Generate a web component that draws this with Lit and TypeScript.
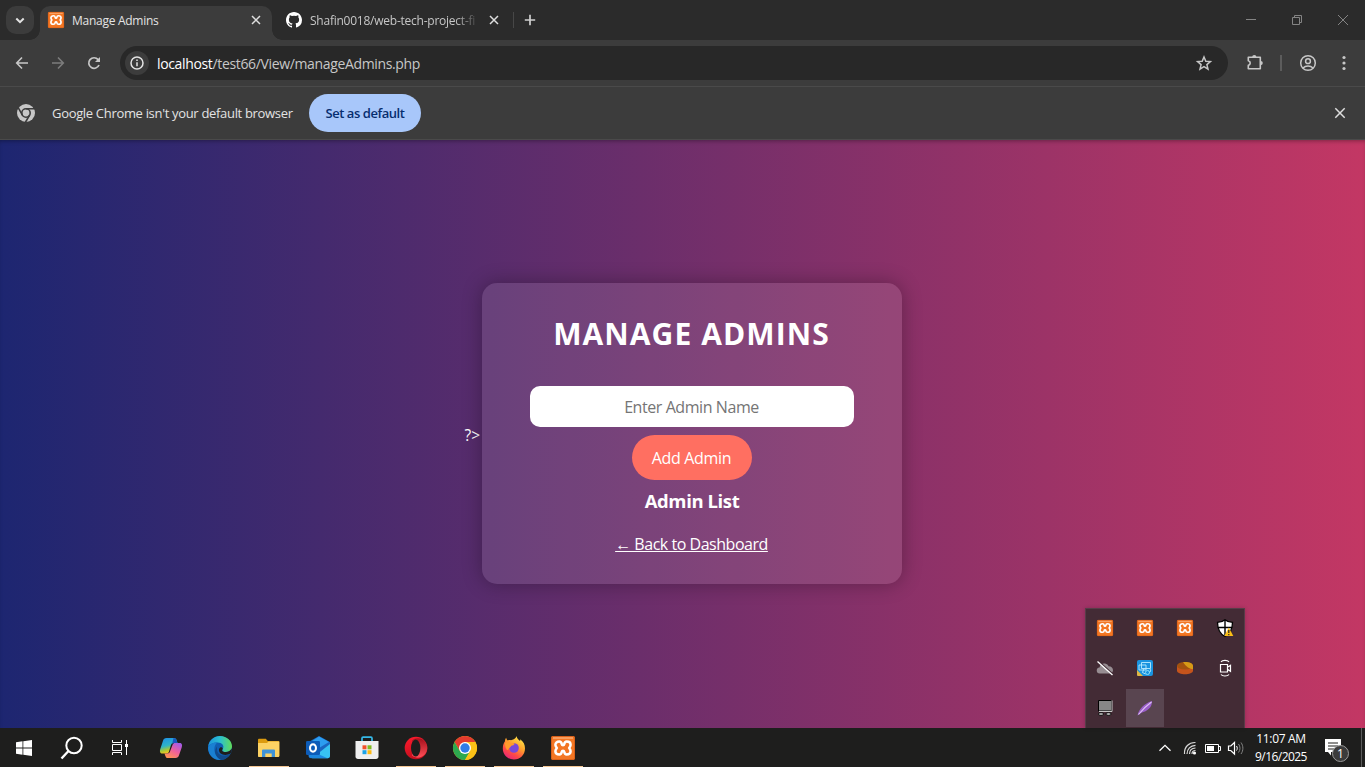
import { LitElement, html, css, svg } from "lit";
import { customElement, property } from "lit/decorators.js";
import { classMap } from "lit/directives/class-map.js";

const icons: Record<string, unknown> = {
  chevronDown: svg`<path d="M8.3 10.5l3.7 3.7 3.7-3.7" fill="none" stroke="#e3e3e3" stroke-width="2"/>`,
  close: svg`<path d="M8 8l8 8M16 8l-8 8" stroke="#dedede" stroke-width="1.5"/>`,
  closeBig: svg`<path d="M7.3 7.3l9.4 9.4M16.700 7.3l-9.4 9.4" stroke="#dedede" stroke-width="1.5"/>`,
  plus: svg`<path d="M12 6.800v10.400M6.800 12h10.400" stroke="#d0d0d0" stroke-width="1.7"/>`,
  winMin: svg`<path d="M7 11.500h10" stroke="#848484" stroke-width="1"/>`,
  winMax: svg`<path d="M7.500 9.500h7v7h-7zM9.500 9.500v-2h7v7h-2" fill="none" stroke="#848484"/>`,
  winClose: svg`<path d="M7 7l10 10M17 7L7 17" stroke="#848484"/>`,
  back: svg`<path d="M18 12H7M12 6.500L6.700 12l5.300 5.500" fill="none" stroke="#c7c7c7" stroke-width="1.6"/>`,
  forward: svg`<path d="M6 12h11M12 6.500l5.300 5.500-5.300 5.500" fill="none" stroke="#7c7c7c" stroke-width="1.6"/>`,
  reload: svg`<path d="M17 14a5.300 5.300 0 1 1-.9-5.400L17.300 10" fill="none" stroke="#c7c7c7" stroke-width="1.7"/><path d="M18 6v5h-5z" fill="#c7c7c7"/>`,
  info: svg`<circle cx="12" cy="12" r="6" fill="none" stroke="#e3e3e3" stroke-width="1.5"/><path d="M12 11.300v3.900M12 8.500v1.500" stroke="#e3e3e3" stroke-width="1.5"/>`,
  star: svg`<path d="M12 6l1.800 4.200 4.600.4-3.500 3 1.100 4.500-4-2.400-4 2.400 1.100-4.500-3.500-3 4.600-.4z" fill="none" stroke="#c7c7c7" stroke-width="1.5"/>`,
  puzzle: svg`<path d="M6.300 6.300h12v11.400h-12v-3.300a2.400 2.400 0 0 0 0-4.700z" fill="none" stroke="#c7c7c7" stroke-width="1.600" stroke-linejoin="round"/><path d="M10.200 6a2.100 2.100 0 0 1 4.200 0zM18.700 10a2.100 2.100 0 0 1 0 4.200z" fill="#c7c7c7"/>`,
  profile: svg`<circle cx="12" cy="12" r="7.300" fill="none" stroke="#c7c7c7" stroke-width="1.500"/><circle cx="12" cy="10.200" r="2.400" fill="none" stroke="#c7c7c7" stroke-width="1.500"/><path d="M7 17c2.600-2.700 7.400-2.700 10 0" fill="none" stroke="#c7c7c7" stroke-width="1.500"/>`,
  dots: svg`<circle cx="12" cy="6.500" r="1.600" fill="#c7c7c7"/><circle cx="12" cy="12" r="1.600" fill="#c7c7c7"/><circle cx="12" cy="17.500" r="1.600" fill="#c7c7c7"/>`,
  chromeMono: svg`<circle cx="12" cy="12" r="9" fill="#c7c7c7"/><circle cx="12" cy="12" r="4.200" fill="none" stroke="#3c3c3c" stroke-width="1.600"/><path d="M12 7.800h8.600M8.400 14.100L4.200 6.700M15.600 14.100l-4.300 7.400" stroke="#3c3c3c" stroke-width="1.600"/>`,
  github: svg`<path fill="#fff" transform="translate(4 4)" d="M8 0C3.580 0 0 3.580 0 8c0 3.540 2.290 6.530 5.470 7.590.4.070.55-.17.55-.38v-1.490c-2.230.49-2.700-1.070-2.700-1.070-.36-.92-.89-1.170-.89-1.170-.73-.5.050-.49.050-.49.8.060 1.230.83 1.230.83.71 1.220 1.870.87 2.330.66.070-.52.280-.87.500-1.070-1.780-.2-3.640-.89-3.640-3.950 0-.87.310-1.590.82-2.150-.080-.2-.36-1.020.080-2.120 0 0 .67-.21 2.200.82a7.600 7.600 0 0 1 4 0c1.530-1.040 2.200-.82 2.200-.82.44 1.100.16 1.920.080 2.120.51.56.82 1.270.82 2.150 0 3.070-1.870 3.750-3.650 3.950.29.250.54.730.54 1.480v2.200c0 .21.150.46.550.38A8 8 0 0 0 16 8c0-4.420-3.580-8-8-8z"/>`,
  xampp: svg`<rect width="24" height="24" rx="2" fill="#f37623"/><rect x=".5" y=".5" width="23" height="23" rx="1.500" fill="none" stroke="#d9601a"/><path d="M2 2h20" stroke="#fbc49a" stroke-width="1"/><path d="M8.300 5.600C10.300 5.600 10.600 7 10.800 8.200Q11 9.200 12 9.200Q13 9.200 13.200 8.200C13.400 7 13.700 5.600 15.700 5.600C18 5.600 19.600 6.800 19.600 8.800C19.600 10.300 18.700 11 18.200 12C18.700 13 19.600 13.700 19.600 15.200C19.600 17.200 18 18.400 15.700 18.400C13.700 18.400 13.400 17 13.200 15.800Q13 14.800 12 14.800Q11 14.800 10.800 15.800C10.600 17 10.300 18.400 8.300 18.400C6 18.400 4.400 17.200 4.400 15.200C4.400 13.700 5.300 13 5.800 12C5.300 11 4.400 10.300 4.400 8.800C4.400 6.800 6 5.600 8.300 5.600z" fill="none" stroke="#fff" stroke-width="2.500"/>`,
  start: svg`<path fill="#fff" d="M4 6.200l6.500-.9v6.200H4zM11.300 5.200L20 4v7.500h-8.700zM4 12.400h6.500v6.300L4 17.800zM11.300 12.400H20V20l-8.700-1.200z"/>`,
  search: svg`<circle cx="14" cy="9.500" r="7.700" fill="none" stroke="#fff" stroke-width="2"/><path d="M8.500 15L1.500 22.500" stroke="#fff" stroke-width="2.400"/>`,
  taskView: svg`<path d="M4.500 4v2.500h9V4M4.500 19v-2.500h9V19M4.500 8.500h9v6h-9zM18.500 4v15" fill="none" stroke="#fff"/><rect x="17" y="8" width="3" height="3" fill="#fff"/>`,
  copilot: svg`<defs><linearGradient id="ca" x1="0" y1="0" x2=".3" y2="1"><stop offset="0" stop-color="#1d8fe8"/><stop offset=".55" stop-color="#2fb4c8"/><stop offset=".8" stop-color="#a3c93a"/><stop offset="1" stop-color="#f7c51e"/></linearGradient><linearGradient id="cb" x1=".8" y1="0" x2=".2" y2="1"><stop offset="0" stop-color="#a35be8"/><stop offset=".5" stop-color="#f0609a"/><stop offset="1" stop-color="#ff9550"/></linearGradient></defs><path d="M7.500 2H15c1.700 0 2.300 1 2.800 2.600L18.500 7H15c-2 0-2.700.8-3.200 2.500L10 15.500c-.5 1.400-1.200 2-2.700 2H3.500C1 17.500.5 15.500 1.300 13L4 4.800C4.600 3 5.500 2 7.500 2z" fill="url(#ca)"/><path d="M16.500 22H9c-1.700 0-2.300-1-2.800-2.600L5.500 17.500H8c2 0 2.700-.8 3.200-2.500L13.500 9c.5-1.500 1.400-2 2.700-2h4.300c2.500 0 3 2 2.200 4.500L20 19.200c-.6 1.800-1.500 2.800-3.500 2.800z" fill="url(#cb)"/><path d="M14.500 2c2 0 2.700 1 3.200 2.500l.8 2.500h-3.300c-.8 0-1.500.2-2 .7z" fill="#1856c0"/>`,
  edge: svg`<defs><linearGradient id="ea" x1="0" y1=".3" x2="1" y2=".3"><stop offset="0" stop-color="#1c93dd"/><stop offset=".5" stop-color="#2bc0cf"/><stop offset="1" stop-color="#62dc58"/></linearGradient></defs><circle cx="12" cy="12" r="12" fill="#0f5fb4"/><path d="M.2 10.500C1 4.500 6 0 12 0c7 0 12 5.200 12 10.300 0 3.700-3 5.700-6 5.700-3 0-4.300-1.200-3.400-2.600 2.400-3.600-.6-6.900-5-6.900C5 6.500 1.200 8.600.2 10.500z" fill="url(#ea)"/><path d="M9.500 6.600C5.500 9 4 19 13.500 23.900 6 25 0 19 .100 11.500 1 8.500 5.500 6.300 9.500 6.600z" fill="#1a80d2"/><path d="M9 13c-.3 6 6.500 8.500 13 5-2.600 4.300-6 5.900-9 5.900C7 21 5.500 15 9 10.500z" fill="#114a8b"/><path d="M14.500 13.300c-1.200 1.700.5 2.900 3.500 2.700 2.500-.1 4.500-1.200 5.500-3.500.8 2-.3 4-1.300 5.300-5 2.500-11.700.8-11.200-4.200.2-1.400 1-2.200 2-2.700 1.200.4 2.200 1.400 1.500 2.400z" fill="#1e1e1d"/>`,
  explorer: svg`<path d="M1 4c0-.8.500-1.300 1.300-1.300h6.500l2 2.300H21c.8 0 1.300.5 1.300 1.300V20H1z" fill="#dc9b10"/><path d="M1 7h9l1.500-1.500H22.300V20c0 .7-.5 1-1 1H2c-.6 0-1-.4-1-1z" fill="#fcd264"/><path d="M5 21v-6.200c0-.8.500-1.300 1.300-1.300h10.400c.8 0 1.300.5 1.300 1.300V21h-3.300v-3.500H8.300V21z" fill="#3f93d8"/>`,
  outlook: svg`<path d="M13 0l11 6v14c0 1.200-1 2.200-2.200 2.200H5C3.500 22.200 2.500 21 2.500 20V6z" fill="#1a66c0"/><path d="M13 .5L23 6 8 15 3 7z" fill="#2c9df0"/><path d="M24 8v12c0 1.200-1 2.200-2.200 2.200H6z" fill="#37c2f1"/><path d="M3 14l18 8H5c-1.300 0-2-.9-2-2z" fill="#1d87df"/><rect y="5" width="14" height="14" rx="1.300" fill="#0d5cb8"/><ellipse cx="7" cy="12" rx="3" ry="3.700" fill="none" stroke="#fff" stroke-width="2"/>`,
  store: svg`<path d="M7 6V2.300c0-.7.400-1.100 1.100-1.100h7.800c.7 0 1.100.4 1.100 1.100V6" fill="none" stroke="#35b9e8" stroke-width="1.700"/><path d="M.5 5h23v15.500c0 1.500-1 2.500-2.500 2.500H3C1.500 23 .5 22 .5 20.500z" fill="#efefef"/><path fill="#f0502a" d="M7.500 9.300h4v4h-4z"/><path fill="#7fba20" d="M12.500 9.300h4v4h-4z"/><path fill="#1ba3e8" d="M7.500 14.200h4v4h-4z"/><path fill="#fdb913" d="M12.500 14.200h4v4h-4z"/>`,
  opera: svg`<defs><linearGradient id="oa" x1="0" y1="0" x2=".3" y2="1"><stop offset="0" stop-color="#ff1b2d"/><stop offset="1" stop-color="#c50f1e"/></linearGradient><linearGradient id="ob" x1="0" y1="0" x2="0" y2="1"><stop offset="0" stop-color="#a5101c"/><stop offset="1" stop-color="#ff5058"/></linearGradient></defs><ellipse cx="12" cy="12" rx="11.300" ry="11.300" fill="url(#oa)"/><path d="M8 4.500c3.500-3 8.500-2.800 12 .2 4.300 4 4.300 10.700 0 14.600-3.500 3-8.500 3.200-12 .2z" fill="url(#ob)"/><ellipse cx="11.700" cy="12" rx="4.700" ry="8.600" fill="#1e1e1d"/>`,
  chrome: svg`<circle cx="12" cy="12" r="12" fill="#fbc116"/><path d="M12 6h10.400A12 12 0 0 0 1.600 6l5.200 9z" fill="#e33b2e"/><path d="M1.600 6A12 12 0 0 0 12 24l5.200-9-10.400 0z" fill="#2da94f"/><path d="M17.200 15L12 24A12 12 0 0 0 22.400 6H12z" fill="#fbc116"/><circle cx="12" cy="12" r="6" fill="#fff"/><circle cx="12" cy="12" r="4.700" fill="#2f7de9"/>`,
  firefox: svg`<defs><linearGradient id="fa" x1=".8" y1="0" x2=".2" y2="1"><stop offset="0" stop-color="#fff04a"/><stop offset=".4" stop-color="#ffa02c"/><stop offset=".7" stop-color="#ff4a46"/><stop offset="1" stop-color="#e4207f"/></linearGradient></defs><path d="M14.500 0c.5 2.500 2 3.600 3.500 5 .4-.6.3-1 .2-1.700C21.500 5.500 23 9 23 12.500 23 19 18 23.500 12 23.500S.8 19 .8 12.500C.8 9 2 6.500 3 5.200 3 4 3.300 2.800 4.200 1.800c.2 1.500.8 2 1.600 2.700C7 4 8 4 9 4.300 10.500 3.500 14 3 14.500 0z" fill="url(#fa)"/><circle cx="12" cy="12" r="4.800" fill="#7a48d8"/><path d="M3 7c2-1.500 4-1 5 0 2 0 4.500-.2 4.500.8 0 1.200-2 1.800-3.500 2.200-.3 1.500-2 1.800-2.500 3C5.500 16 3 12 3 7z" fill="#ff9b2a"/>`,
  chevronUp: svg`<path d="M6.500 14.800l5.500-5.500 5.500 5.500" fill="none" stroke="#fff" stroke-width="1.300"/>`,
  wifi: svg`<g fill="none" stroke="#d8d8d8" stroke-width="1.200"><path d="M6.500 18C6 11 11 6.200 17.500 6.500M9 18c0-5 3.500-8.500 8.500-8.700M11.500 18c0-3.500 2.500-5.800 6-6M14 18c0-2 1.500-3.500 3.500-3.500"/></g><circle cx="16.500" cy="17" r="1.600" fill="#fff"/>`,
  battery: svg`<path d="M4.500 8.500h13v8h-13zM18 10.500h1.500v4H18" fill="none" stroke="#fff"/><path d="M6 10h7v5H6z" fill="#fff"/>`,
  speaker: svg`<path d="M4.500 10v4.500h2.300l3.700 3.500V6.500L6.800 10z" fill="none" stroke="#fff" stroke-width="1.200"/><path d="M12.500 10c1 1.300 1 3.200 0 4.500" fill="none" stroke="#fff"/><path d="M14.500 8c2 2.500 2 6 0 8.500M17 6.500c2.500 3.500 2.500 8 0 11.500" fill="none" stroke="#858585"/>`,
  notify: svg`<path d="M3 3h16v13H9v3.500L6 16H3z" fill="#fff"/><path d="M6 7h10M6 10h10M6 13h6" stroke="#1e1e1d"/>`,
  shield: svg`<path d="M12 3.800c2 1.800 4.500 2.500 7.500 2.500 0 7-2 11.500-7.500 14.200C6.500 17.800 4.500 13.300 4.500 6.300c3 0 5.500-.7 7.500-2.500z" fill="#fff" stroke="#000" stroke-width="1.300"/><path d="M12 4v16M5 11.500h14" stroke="#000" stroke-width="1.400"/><path d="M15.800 11.500L20.300 20h-9z" fill="#fcbf16"/><path d="M15.800 14v3M15.800 18v1.200" stroke="#222" stroke-width="1.200"/>`,
  cloudOff: svg`<path d="M7 17.500a3 3 0 0 1-.5-6c.5-3 3-4.500 5.500-4 2 .3 3 1.500 3.500 2.700 3 0 4.500 2 4.500 4s-1.500 3.300-3.300 3.300z" fill="#978d92"/><path d="M5.300 5l15 13.500" stroke="#432b35" stroke-width="1.600"/><path d="M4.500 5.500l15 13.500" stroke="#fff" stroke-width="1.300"/>`,
  network: svg`<rect x="4" y="4" width="16" height="16" rx="2" fill="#1994e0"/><path d="M4 14l6 6H5.500C4.500 20 4 19.500 4 18.500z" fill="#e0b743"/><path d="M8.500 6.500h9v6h-9zM6 9h7v5H6zM11 12.500l-1.500 4 3 1.500M17 13c1 1 1 3-1 3.500" fill="none" stroke="#b9ebff" stroke-width=".9"/><circle cx="14.500" cy="16.500" r="2" fill="none" stroke="#8de0f5"/>`,
  disc: svg`<path d="M4 9.500v5c0 5 16 5 16 0v-5z" fill="#c5541c"/><ellipse cx="12" cy="9.800" rx="8" ry="3.800" fill="#a2520f"/><path d="M10 6.200c5-.7 10 1 10 3.600v3.500c-3-.3-7-2.500-10-7.100z" fill="#d59a17"/>`,
  camera: svg`<path d="M7.500 8.500h7v7.500h-7zM14.500 11.300l3-2v6l-3-2" fill="none" stroke="#fff" stroke-width="1.200"/><path d="M8 5.800c1.500-2 6.500-2 8 0M8 18.500c1.500 2 6.500 2 8 0" fill="none" stroke="#fff" stroke-width="1.200"/>`,
  monitor: svg`<path d="M5.500 4.500h13v10.500h-13z" fill="#878787" stroke="#000"/><path d="M6 15.500h13v-11" fill="none" stroke="#c8c8c8"/><ellipse cx="8" cy="18" rx="2.600" ry="1.500" fill="#aaa" stroke="#000" stroke-width=".8"/><ellipse cx="15.500" cy="18" rx="2.600" ry="1.500" fill="#aaa" stroke="#000" stroke-width=".8"/>`,
  feather: svg`<path d="M4.500 19.500C6 13 11 7.500 19 5c.3 4.500-2.500 9-8.500 11-2 .7-3.500 1.500-6 3.500z" fill="#9a5fc9"/><path d="M5.500 18.500C9 14 13 10 18.500 6" stroke="#e0c4f5" stroke-width="1.100" fill="none"/>`,
};

@customElement("ui-icon")
export class UiIcon extends LitElement {
  @property() name = "";
  static styles = css`
    :host { display: block; width: 24px; height: 24px; flex: none; }
    svg { display: block; width: 100%; height: 100%; overflow: visible; }
  `;
  render() {
    return html`<svg viewBox="0 0 24 24" aria-hidden="true">${icons[this.name]}</svg>`;
  }
}

@customElement("browser-chrome")
export class BrowserChrome extends LitElement {
  static styles = css`
    :host { display: block; flex: none; color: #e3e3e3; font-size: 12px; }
    .strip { display: flex; height: 40px; background: #2b2b2b; align-items: center; padding-left: 6px; box-sizing: border-box; }
    .list { width: 28px; height: 28px; border-radius: 10px; background: #3c3c3c; display: grid; place-items: center; margin-right: 6px; }
    .tab { display: flex; align-items: center; width: 232px; box-sizing: border-box; padding: 0 4px 0 8px; align-self: flex-end; position: relative; }
    .active { background: #3c3c3c; border-radius: 10px 10px 0 0; height: 34px; padding-bottom: 6px; }
    .active::before, .active::after { content: ""; position: absolute; bottom: 0; width: 10px; height: 10px; }
    .active::before { left: -10px; background: radial-gradient(circle at 0 0, transparent 9.500px, #3c3c3c 10px); }
    .active::after { right: -10px; background: radial-gradient(circle at 100% 0, transparent 9.500px, #3c3c3c 10px); }
    .second { padding-left: 14px; width: 234px; height: 40px; }
    .fav { width: 16px; height: 16px; margin-right: 8px; }
    .gh { width: 24px; height: 24px; margin: 0 4px 0 -4px; }
    .title { flex: 1; white-space: nowrap; letter-spacing: -0.27px; line-height: 18px; padding-top: 2px; }
    .second .title { flex: none; width: 168px; margin-right: 4px; color: #c7c7c7; letter-spacing: -0.24px; -webkit-mask-image: linear-gradient(to right, #000 145px, transparent 170px); mask-image: linear-gradient(to right, #000 145px, transparent 170px); }
    .sep { width: 1px; height: 16px; background: #474747; margin: 0 4px 0 7px; }
    .controls { margin-left: auto; display: flex; gap: 22px; padding-right: 10px; }
    .toolbar { display: flex; align-items: center; height: 46px; background: #3c3c3c; padding: 0 9px 0 10px; }
    .nav { display: flex; gap: 12px; margin-right: 14px; }
    .omni { flex: 1; height: 34px; border-radius: 17px; background: #282828; display: flex; align-items: center; padding: 0 12px 0 5px; }
    .site { border-radius: 50%; background: #3c3c3c; width: 24px; height: 24px; margin-right: 8px; }
    .url { flex: 1; font-size: 14px; color: #c7c7c7; letter-spacing: -0.35px; }
    .url b { font-weight: 400; color: #fff; }
    .tools { display: flex; align-items: center; margin-left: 14px; }
    .bar { width: 2px; height: 16px; background: #5c5c5c; margin: 0 14px 0 14px; }
    .dots { margin-left: 12px; }
    .info { height: 54px; box-sizing: border-box; border-top: 1px solid #4a4a4a; border-bottom: 1px solid #4a4a4a; background: #3c3c3c; display: flex; align-items: center; padding: 0 13px 0 14px; font-size: 13px; }
    .msg { width: 241px; margin: 0 16px 0 14px; white-space: nowrap; letter-spacing: -0.32px; }
    .set { width: 112px; height: 38px; border-radius: 19px; background: #a8c7fa; color: #062e6f; font: inherit; font-weight: 600; border: 0; padding: 0; letter-spacing: -0.45px; }
    .dismiss { margin-left: auto; }
  `;
  render() {
    return html`
      <div class="strip">
        <div class="list"><ui-icon name="chevronDown"></ui-icon></div>
        <div class="tab active">
          <ui-icon class="fav" name="xampp"></ui-icon><span class="title">Manage Admins</span><ui-icon name="close"></ui-icon>
        </div>
        <div class="tab second">
          <ui-icon class="gh" name="github"></ui-icon><span class="title">Shafin0018/web-tech-project-fi</span><ui-icon name="close"></ui-icon>
        </div>
        <div class="sep"></div>
        <ui-icon name="plus"></ui-icon>
        <div class="controls"><ui-icon name="winMin"></ui-icon><ui-icon name="winMax"></ui-icon><ui-icon name="winClose"></ui-icon></div>
      </div>
      <div class="toolbar">
        <div class="nav"><ui-icon name="back"></ui-icon><ui-icon name="forward"></ui-icon><ui-icon name="reload"></ui-icon></div>
        <div class="omni">
          <ui-icon class="site" name="info"></ui-icon>
          <span class="url"><b>localhost</b>/test66/View/manageAdmins.php</span>
          <ui-icon name="star"></ui-icon>
        </div>
        <div class="tools">
          <ui-icon name="puzzle"></ui-icon>
          <div class="bar"></div>
          <ui-icon name="profile"></ui-icon>
          <ui-icon class="dots" name="dots"></ui-icon>
        </div>
      </div>
      <div class="info">
        <ui-icon name="chromeMono"></ui-icon>
        <span class="msg">Google Chrome isn't your default browser</span>
        <button class="set">Set as default</button>
        <ui-icon class="dismiss" name="closeBig"></ui-icon>
      </div>
    `;
  }
}

@customElement("admin-page")
export class AdminPage extends LitElement {
  static styles = css`
    :host { flex: 1; display: flex; justify-content: center; align-items: center; background: linear-gradient(to right, #1d2671, #c33764); color: #fff; font-size: 16px; box-shadow: inset 0 3px 4px -2px rgba(0, 0, 0, 0.35); box-sizing: border-box; }
    .stray { width: 17px; white-space: nowrap; line-height: 21px; font-size: 15.5px; padding-top: 2px; }
    .card { width: 420px; height: 301px; box-sizing: border-box; border-radius: 15px; background: rgba(255, 255, 255, 0.1); box-shadow: 0 0 20px rgba(0, 0, 0, 0.3); display: flex; flex-direction: column; align-items: center; padding: 30px 48px 0; margin-right: -1px; margin-top: -1px; }
    h2 { margin: 0 0 32px; font-size: 30px; line-height: 41px; font-weight: 700; letter-spacing: 1.1px; white-space: nowrap; }
    input { width: 100%; height: 41px; box-sizing: border-box; border: 0; border-radius: 10px; background: #fff; text-align: center; font: inherit; letter-spacing: -0.43px; padding: 0; }
    input::placeholder { color: #757575; }
    button { margin-top: 8px; width: 120px; height: 45px; border: 0; border-radius: 23px; background: #ff6f61; color: #fff; font: inherit; letter-spacing: -0.33px; padding: 0; }
    h3 { margin: 8px 0 0; font-size: 18.5px; line-height: 25px; letter-spacing: -0.4px; padding-left: 1px; }
    a { margin-top: 20px; line-height: 22px; color: #fff; text-decoration: underline; white-space: nowrap; letter-spacing: -0.47px; }
  `;
  render() {
    return html`
      <span class="stray">?&gt;</span>
      <section class="card">
        <h2>MANAGE ADMINS</h2>
        <input placeholder="Enter Admin Name" />
        <button>Add Admin</button>
        <h3>Admin List</h3>
        <a>← Back to Dashboard</a>
      </section>
    `;
  }
}

@customElement("task-bar")
export class TaskBar extends LitElement {
  static styles = css`
    :host { display: flex; flex: none; height: 39px; background: #1e1e1d; color: #fff; align-items: stretch; position: relative; }
    .sys { display: flex; align-items: center; gap: 24px; padding-left: 12px; width: 139px; box-sizing: border-box; }
    .apps { display: flex; gap: 9px; margin-left: 12px; }
    .app { width: 40px; box-sizing: border-box; display: grid; place-items: center; padding-top: 1px; border-bottom: 1px solid transparent; }
    .open { border-bottom-color: #f5c794; }
    .tray { margin-left: auto; display: flex; align-items: center; }
    .tray ui-icon + ui-icon { margin-left: -1px; }
    .tray .up { margin-right: 2px; }
    .clock { width: 66px; text-align: center; font-size: 12px; line-height: 18px; letter-spacing: -0.55px; }
    .time { letter-spacing: -0.35px; }
    .bell { position: relative; margin: 0 15px 0 8px; }
    .badge { position: absolute; left: 10px; top: 9px; width: 15px; height: 15px; border: 1px solid #9a9a9a; border-radius: 50%; background: #3b3b3b; font-size: 12px; line-height: 15px; text-align: center; }
    .end { width: 1px; align-self: stretch; background: #5b5b5b; margin-right: 3px; }
    .flyout { position: absolute; right: 120px; bottom: 39px; width: 160px; height: 120px; box-sizing: border-box; background: #432b35; border: 1px solid #573d48; border-bottom: 0; display: grid; grid-template-columns: repeat(4, 40px); grid-template-rows: repeat(3, 40px); box-shadow: 0 0 4px rgba(0, 0, 0, 0.2); }
    .cell { display: grid; place-items: center; width: 38px; height: 38px; }
    .hot { background: #594550; }
    .small { width: 16px; height: 16px; }
  `;
  private apps: [string, boolean][] = [
    ["copilot", false], ["edge", false], ["explorer", true], ["outlook", false], ["store", false],
    ["opera", true], ["chrome", true], ["firefox", true], ["xampp", true],
  ];
  private trayApps = ["xampp", "xampp", "xampp", "shield", "cloudOff", "network", "disc", "camera", "monitor", "feather"];
  render() {
    return html`
      <div class="sys"><ui-icon name="start"></ui-icon><ui-icon name="search"></ui-icon><ui-icon name="taskView"></ui-icon></div>
      <div class="apps">
        ${this.apps.map(([n, open]) => html`<div class=${classMap({ app: true, open })}><ui-icon name=${n}></ui-icon></div>`)}
      </div>
      <div class="tray">
        <ui-icon class="up" name="chevronUp"></ui-icon><ui-icon name="wifi"></ui-icon><ui-icon name="battery"></ui-icon><ui-icon name="speaker"></ui-icon>
        <div class="clock"><span class="time">11:07 AM</span><br />9/16/2025</div>
        <div class="bell"><ui-icon name="notify"></ui-icon><span class="badge">1</span></div>
        <div class="end"></div>
      </div>
      <div class="flyout">
        ${this.trayApps.map((n) => html`<div class=${classMap({ cell: true, hot: n === "feather" })}><ui-icon class=${classMap({ small: n === "xampp" })} name=${n}></ui-icon></div>`)}
      </div>
    `;
  }
}

@customElement("app-root")
export class AppRoot extends LitElement {
  static styles = css`
    :host { display: flex; flex-direction: column; width: 100vw; height: 100vh; overflow: hidden; font-family: "Segoe UI", "Open Sans", "Noto Sans", sans-serif; }
  `;
  render() {
    return html`<browser-chrome></browser-chrome><admin-page></admin-page><task-bar></task-bar>`;
  }
}
